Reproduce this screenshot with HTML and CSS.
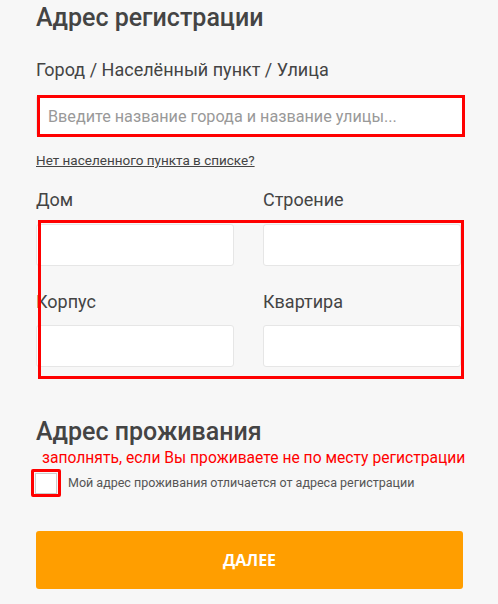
FILE: index.html
```html
<!DOCTYPE html>
<html lang="ru">
<head>
<meta charset="utf-8">
<link rel="stylesheet" href="styles.css">
</head>
<body>
<div class="form">
  <h2 class="title">Адрес регистрации</h2>
  <div class="label first">Город / Населённый пункт / Улица</div>
  <div class="hl-wrap">
    <div class="input city"><span class="ph">Введите название города и название улицы...</span></div>
    <div class="hl hl-city"></div>
  </div>
  <a class="link" href="#">Нет населенного пункта в списке?</a>
  <div class="grid-wrap">
    <div class="grid">
      <div class="field">
        <div class="label">Дом</div>
        <div class="input small"></div>
      </div>
      <div class="field">
        <div class="label">Строение</div>
        <div class="input small"></div>
      </div>
      <div class="field second">
        <div class="label">Корпус</div>
        <div class="input small"></div>
      </div>
      <div class="field second">
        <div class="label">Квартира</div>
        <div class="input small"></div>
      </div>
    </div>
    <div class="hl hl-grid"></div>
  </div>
  <h2 class="title title2">Адрес проживания</h2>
  <div class="note">заполнять, если Вы проживаете не по месту регистрации</div>
  <label class="check">
    <span class="box-wrap"><span class="box"></span><span class="hl hl-box"></span></span>
    <span class="check-text">Мой адрес проживания отличается от адреса регистрации</span>
  </label>
  <button class="btn">ДАЛЕЕ</button>
</div>
</body>
</html>
```

FILE: styles.css
```css
html, body {
  margin: 0;
  padding: 0;
  background: #f7f7f7;
  font-family: Roboto, "Noto Sans", sans-serif;
  color: #444;
}
.form {
  width: 427px;
  margin-left: 36px;
  padding-top: 3px;
}
.title {
  margin: 0;
  font-size: 25px;
  line-height: 30px;
  font-weight: 500;
  color: #444;
}
.label {
  font-size: 18px;
  line-height: 22px;
  color: #444;
}
.label.first {
  margin-top: 26px;
}
.hl-wrap {
  position: relative;
  margin-top: 14px;
}
.input {
  background: #fff;
  border: 1px solid #e6e6e6;
  border-radius: 3px;
  box-sizing: border-box;
}
.input.city {
  height: 42px;
  display: flex;
  align-items: center;
  padding-left: 11px;
}
.ph {
  font-size: 16.2px;
  color: #999;
}
.hl {
  position: absolute;
  border: 3px solid #ff0000;
  box-sizing: border-box;
  pointer-events: none;
}
.hl-city {
  left: 1px;
  top: 0;
  width: 428px;
  height: 42px;
}
.link {
  display: block;
  margin-top: 14px;
  font-size: 13.5px;
  line-height: 18px;
  color: #444;
  text-decoration: underline;
  width: max-content;
}
.grid-wrap {
  position: relative;
  margin-top: 20px;
}
.grid {
  display: grid;
  grid-template-columns: 198px 198px;
  column-gap: 29px;
}
.field .input.small {
  height: 42px;
  margin-top: 13px;
}
.field.second {
  margin-top: 25px;
}
.field.second .input.small {
  margin-top: 12px;
}
.hl-grid {
  left: 2px;
  top: 31px;
  width: 426px;
  height: 159px;
}
.title2 {
  margin-top: 50px;
}
.note {
  margin-left: 6px;
  margin-top: 1px;
  font-size: 15.65px;
  line-height: 20px;
  color: #ff0000;
  white-space: nowrap;
}
.check {
  display: flex;
  align-items: center;
  margin-top: 1px;
  margin-left: -5px;
}
.box-wrap {
  position: relative;
  width: 30px;
  height: 28px;
  display: flex;
  align-items: center;
  justify-content: center;
}
.box {
  width: 22px;
  height: 21px;
  background: #fff;
  border: 1px solid #ccc;
  box-sizing: border-box;
}
.hl-box {
  left: 0;
  top: 0;
  width: 30px;
  height: 28px;
  border-radius: 2px;
}
.check-text {
  margin-left: 7px;
  font-size: 12.5px;
  line-height: 18px;
  color: #555;
}
.btn {
  display: block;
  width: 427px;
  height: 58px;
  margin-top: 34px;
  border: none;
  border-radius: 3px;
  background: #ff9e00;
  color: #fff;
  font-family: "Open Sans", sans-serif;
  font-weight: 700;
  font-size: 16px;
}
```
